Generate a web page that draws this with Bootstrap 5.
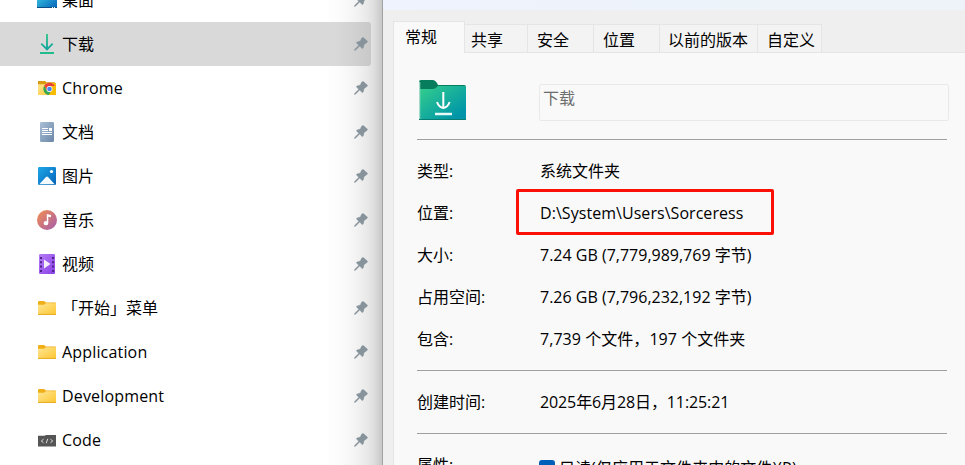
<!DOCTYPE html>
<html lang="zh-CN">
<head>
<meta charset="utf-8">
<meta name="viewport" content="width=device-width, initial-scale=1">
<title>下载 属性</title>
<link href="https://cdn.jsdelivr.net/npm/bootstrap@5.3.0/dist/css/bootstrap.min.css" rel="stylesheet">
<style>
html,body{height:465px;overflow:hidden}
body{font:16px/24px "Open Sans","Noto Sans CJK SC",sans-serif;color:#000;background:#fff}
.explorer{width:382px;height:465px;flex:none;overflow:hidden;background:linear-gradient(90deg,#fff 325px,#fbfbfb 342px,#f4f4f4 355px,#e9e9e9 367px,#dedede 374px,#c8c8c8 382px)}
.quick-list{margin-top:-22px}
.entry{height:44px;width:371px;padding:0 3px 0 37px;white-space:nowrap}
.entry.selected{background:linear-gradient(90deg,#d9d9d9 335px,#d2d2d2 352px,#c8c8c8 371px);border-radius:0 3px 3px 0}
.entry .ico{width:20px;height:20px;flex:none;margin-right:5px}
.entry .pin{width:14px;height:14px;margin-left:auto;flex:none;fill:#87939b;stroke:#87939b;stroke-width:.4px}
.latin{letter-spacing:.17px}
.path-text{letter-spacing:.05px}
.date-text{letter-spacing:-.11px}
.props{border-left:1px solid #a2a2a2;background:#efefef;height:465px;overflow:hidden}
.caption-bar{height:10px;background:linear-gradient(90deg,#eef3fd,#edf3f8)}
.tab-strip{height:43px;padding:0 0 0 10px}
.tab-item{height:29px;border:1px solid #e5e5e5;border-left:0;background:#f3f3f3;padding:3px 0 0 6px;white-space:nowrap}
.tab-item.current{height:32px;background:#f9f9f9;border:1px solid #e5e5e5;border-bottom:0;padding:3px 0 0 11px}
.w63{width:63px}.w66{width:66px}.w98{width:98px}.w64{width:64px}.w72{width:72px}
.w66,.w64{padding-left:9px}
.w98{padding-left:8px}
.tab-rest{height:1px;background:#e5e5e5}
.page{margin-left:10px;border-left:1px solid #e5e5e5;background:#f9f9f9;height:412px;padding:27px 14px 0 23px}
.head-row{height:59px}
.folder-art{margin-left:2px;flex:none}
.name-box{margin-left:71px;margin-top:4px;width:410px;height:37px;flex:none;border:1px solid #e9e9e9;border-radius:2px;color:#6d6d6d;padding:1px 0 0 3px}
.rule{height:1px;background:#a0a0a0}
.prop{height:42px}
.prop.tall{height:62px}
.prop>:first-child{width:123px;flex:none}
.prop-list{padding:10px 0}
.marked{position:relative}
.marked::after{content:"";position:absolute;left:-24px;top:-12px;width:258px;height:46px;border:3px solid #fb1005;border-radius:2px}
.option{padding-top:6px}
.checkbox{width:16px;height:16px;border-radius:3px;background:#005fb8;margin:0 4px 0 -1px}
</style>
<script src="https://cdn.jsdelivr.net/npm/bootstrap@5.3.0/dist/js/bootstrap.bundle.min.js"></script>
</head>
<body>
<svg width="0" height="0" class="position-absolute" aria-hidden="true">
<defs>
<linearGradient id="gGreen" x1="0" y1="0" x2="1" y2="1"><stop offset="0" stop-color="#34cf8c"/><stop offset=".85" stop-color="#0095a8"/></linearGradient>
<linearGradient id="gArrow" gradientUnits="userSpaceOnUse" x1="0" y1="0" x2="0" y2="16"><stop offset="0" stop-color="#36c68a"/><stop offset="1" stop-color="#12a3a0"/></linearGradient>
<linearGradient id="gBlue" x1="0" y1="0" x2="1" y2="1"><stop offset="0" stop-color="#1ea7e8"/><stop offset="1" stop-color="#0563b8"/></linearGradient>
<linearGradient id="gDesk" x1="0" y1="0" x2="1" y2="1"><stop offset="0" stop-color="#3fd0e8"/><stop offset="1" stop-color="#0563b8"/></linearGradient>
<linearGradient id="gDoc" x1="0" y1="0" x2="1" y2="1"><stop offset="0" stop-color="#a9bfd6"/><stop offset="1" stop-color="#6b87a8"/></linearGradient>
<linearGradient id="gMusic" x1="0" y1="0" x2="1" y2="1"><stop offset="0" stop-color="#f58f50"/><stop offset="1" stop-color="#a35cae"/></linearGradient>
<linearGradient id="gVideo" x1="0" y1="0" x2="1" y2="1"><stop offset="0" stop-color="#b47cf5"/><stop offset="1" stop-color="#8a3fe8"/></linearGradient>
<linearGradient id="gFolder" x1="0" y1="0" x2="1" y2="1"><stop offset="0" stop-color="#ffe694"/><stop offset="1" stop-color="#fcc630"/></linearGradient>
<symbol id="pin" viewBox="0 0 14 14"><path d="M7.8.9Q8.8 0 9.6.7L13.3 4Q14 4.8 13 5.5L10.2 7.4L9.2 11Q8.7 12 7.8 11.2L5.7 9.1L1.7 13.1L.3 13.6L.8 12.2L4.8 8.2L2.7 6.2Q2 5.4 3.1 5L6.3 3.9Z"/></symbol>
<symbol id="folder" viewBox="0 0 20 20"><path d="M1 4.2Q1 3 2 3H7.2L8.8 4.6H18Q19 4.6 19 5.5V8H1Z" fill="#f0ae18"/><path d="M1 6.8H7L9 5.3H19V16Q19 17 18 17H2Q1 17 1 16Z" fill="url(#gFolder)"/><path d="M1 16.4H19" stroke="#e9ac27" stroke-width="1"/></symbol>
</defs>
</svg>
<div class="d-flex">
<aside class="explorer">
<div class="quick-list d-flex flex-column">
<div class="entry d-flex align-items-center"><svg class="ico" viewBox="0 0 20 20"><rect y="2" width="20" height="16" rx="1.5" fill="url(#gDesk)"/><path d="M0 17H20V18H0Z" fill="#0a4d86"/><path d="M15 17.5h1m1 0h1" stroke="#fff"/></svg><span>桌面</span><svg class="pin"><use href="#pin"/></svg></div>
<div class="entry selected d-flex align-items-center"><svg class="ico" viewBox="0 0 20 20"><path d="M10 0V15.3M4.3 9.6L10 15.3L15.7 9.6" fill="none" stroke-width="1.9" stroke="url(#gArrow)"/><path d="M3 18h14v2H3Z" fill="#20bc8c"/></svg><span>下载</span><svg class="pin"><use href="#pin"/></svg></div>
<div class="entry d-flex align-items-center"><svg class="ico" viewBox="0 0 20 20"><path d="M1 3H8L9.5 4.3H18V8H1Z" fill="#d99a12"/><path d="M1 6.3H8L10 5H19V17H1Z" fill="url(#gFolder)"/><path d="M12.5 5H19V17H11Z" fill="#fbbc05"/><path d="M7.1 7.8A6.3 6.3 0 0 1 18 8H12.5L9.8 12.4Z" fill="#ea4335"/><path d="M7.1 7.8L9.8 12.5Q11 14.2 13.5 14L11.8 17A6.3 6.3 0 0 1 7.1 7.8Z" fill="#34a853"/><circle cx="12.5" cy="11" r="2.9" fill="#fff"/><circle cx="12.5" cy="11" r="2.3" fill="#4285f4"/></svg><span class="latin">Chrome</span><svg class="pin"><use href="#pin"/></svg></div>
<div class="entry d-flex align-items-center"><svg class="ico" viewBox="0 0 20 20"><rect x="3" width="14" height="20" rx="1.3" fill="url(#gDoc)"/><path d="M5 6.5h6M5 8.5h6M5 10.5h10M5 12.5h10" stroke="#fff" stroke-width="1"/><path d="M12 6h3v3h-3Z" fill="#fff"/></svg><span>文档</span><svg class="pin"><use href="#pin"/></svg></div>
<div class="entry d-flex align-items-center"><svg class="ico" viewBox="0 0 20 20"><rect x="1" y="1" width="18" height="18" rx="1.3" fill="url(#gBlue)"/><path d="M2.3 18.3L9 11Q10 10.1 11 11L17.7 18.3Z" fill="#f5faff"/><circle cx="14.5" cy="5.5" r="1.6" fill="#fff"/></svg><span>图片</span><svg class="pin"><use href="#pin"/></svg></div>
<div class="entry d-flex align-items-center"><svg class="ico" viewBox="0 0 20 20"><circle cx="10" cy="10" r="10" fill="url(#gMusic)"/><path d="M9.8 4L14 5V7.3L11.3 6.7V13A2.3 2.1 0 1 1 9.8 11.2Z" fill="#fff"/></svg><span>音乐</span><svg class="pin"><use href="#pin"/></svg></div>
<div class="entry d-flex align-items-center"><svg class="ico" viewBox="0 0 20 20"><rect x="2" width="16" height="20" rx="1.3" fill="url(#gVideo)"/><path d="M4 3V18M16 3V18" stroke="#4c2488" stroke-width="2" stroke-dasharray="2 2.3"/><path d="M7 5.5L13.5 10L7 14.5Z" fill="#f4edff"/></svg><span>视频</span><svg class="pin"><use href="#pin"/></svg></div>
<div class="entry d-flex align-items-center"><svg class="ico"><use href="#folder"/></svg><span>「开始」菜单</span><svg class="pin"><use href="#pin"/></svg></div>
<div class="entry d-flex align-items-center"><svg class="ico"><use href="#folder"/></svg><span class="latin">Application</span><svg class="pin"><use href="#pin"/></svg></div>
<div class="entry d-flex align-items-center"><svg class="ico"><use href="#folder"/></svg><span class="latin">Development</span><svg class="pin"><use href="#pin"/></svg></div>
<div class="entry d-flex align-items-center"><svg class="ico" viewBox="0 0 20 20"><path d="M1 5.8H7.5L9 5H19V16.6H1Z" fill="#555"/><path d="M6.5 9.2L4.3 11L6.5 12.8M13.5 9.2L15.7 11L13.5 12.8M10.8 8.8L9.2 13.2" stroke="#ddd" fill="none"/></svg><span class="latin">Code</span><svg class="pin"><use href="#pin"/></svg></div>
</div>
</aside>
<main class="props flex-grow-1">
<div class="caption-bar"></div>
<div class="tab-strip d-flex align-items-end">
<div class="tab-item current w72">常规</div>
<div class="tab-item w63">共享</div>
<div class="tab-item w66">安全</div>
<div class="tab-item w66">位置</div>
<div class="tab-item w98">以前的版本</div>
<div class="tab-item w64">自定义</div>
<div class="tab-rest flex-grow-1"></div>
</div>
<section class="page">
<div class="head-row d-flex">
<svg class="folder-art" width="49" height="42" viewBox="0 0 49 42"><path d="M0 2Q0 0 2 0H14Q16 0 18 3L19 5H45Q47 5 47 7V40H0Z" fill="#087d5d"/><path d="M1 9H14Q16 9 18 7L19 6H47V38Q47 40 45 40H3Q1 40 1 38Z" fill="url(#gGreen)"/><path d="M2 39.5H46" stroke="#087d71"/><path d="M.5 2V39" stroke="#a4dac9" stroke-width="1.5"/><path d="M24.3 12V28M18 22Q20 27.5 24.3 28Q28.6 27.5 30.6 22" stroke="#fff" stroke-width="2" fill="none"/><path d="M16 34H33" stroke="#e8faf8" stroke-width="2.5"/></svg>
<div class="name-box">下载</div>
</div>
<div class="me-1">
<div class="rule"></div>
<div class="prop-list text-nowrap">
<div class="prop d-flex align-items-center"><span>类型:</span><span>系统文件夹</span></div>
<div class="prop d-flex align-items-center"><span>位置:</span><span class="marked path-text">D:\System\Users\Sorceress</span></div>
<div class="prop d-flex align-items-center"><span>大小:</span><span>7.24 GB (7,779,989,769 字节)</span></div>
<div class="prop d-flex align-items-center"><span>占用空间:</span><span>7.26 GB (7,796,232,192 字节)</span></div>
<div class="prop d-flex align-items-center"><span>包含:</span><span class="path-text">7,739 个文件，197 个文件夹</span></div>
</div>
<div class="rule"></div>
<div class="prop tall d-flex align-items-center"><span>创建时间:</span><span class="date-text">2025年6月28日，11:25:21</span></div>
<div class="rule"></div>
<div class="prop tall d-flex align-items-center"><span>属性:</span><div class="option d-flex align-items-center"><span class="checkbox"></span><span class="path-text">只读(仅应用于文件夹中的文件)(R)</span></div></div>
</div>
</section>
</main>
</div>
</body>
</html>
